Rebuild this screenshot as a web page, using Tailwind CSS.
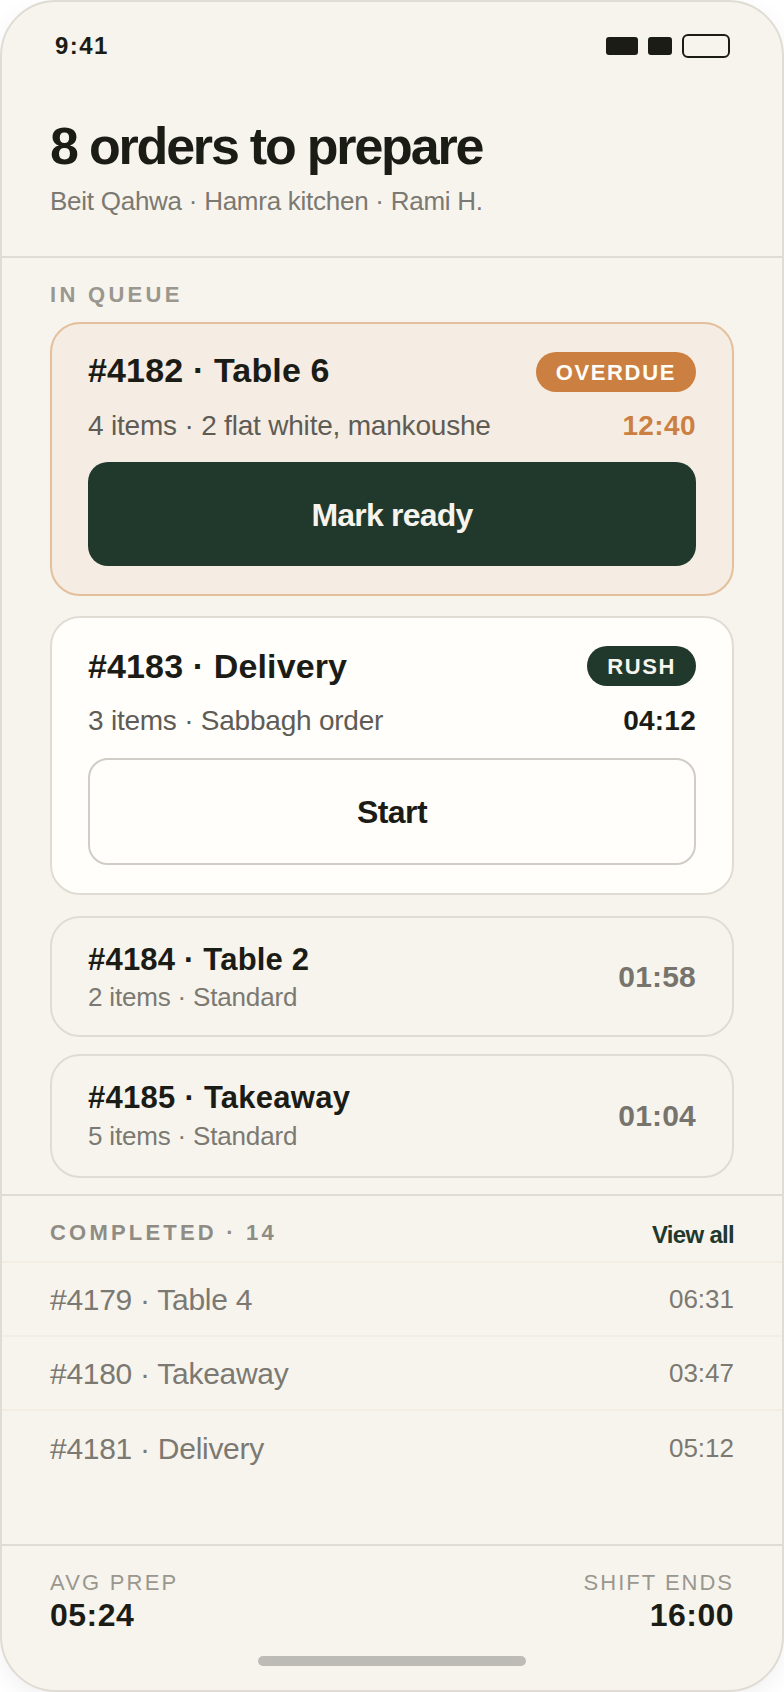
<!DOCTYPE html>
<html lang="en">
<head>
    <meta charset="UTF-8">
    <meta name="viewport" content="width=device-width, initial-scale=1.0">
    <title>Orders to prepare</title>
    <script src="https://cdn.jsdelivr.net/npm/@tailwindcss/browser@4"></script>
</head>
<body class="bg-white">
    <div class="w-[784px] h-[1692px] flex flex-col border-2 border-[#e0dcd3] rounded-[56px] overflow-hidden bg-[#f7f4ee] text-[#1c1c17] shadow-[0_8px_24px_rgba(0,0,0,0.06)] font-['Liberation_Sans',sans-serif]">

        <!-- Status bar -->
        <div class="h-[88px] shrink-0 flex items-center justify-between pl-[53px] pr-[52px]">
            <span class="text-[24px] font-bold tracking-[1.4px]">9:41</span>
            <div class="flex items-center">
                <div class="w-8 h-[18px] rounded-[3px] bg-[#1c1c17]"></div>
                <div class="w-6 h-[18px] rounded-[3px] bg-[#1c1c17] ml-[10px]"></div>
                <div class="w-12 h-6 rounded-[6px] border-2 border-[#1c1c17] ml-[10px]"></div>
            </div>
        </div>

        <!-- Header -->
        <div class="shrink-0 px-12 pt-[26px] pb-[38px] border-b-2 border-[#e0dcd3]">
            <h1 class="text-[52px] leading-[60px] font-bold tracking-[-2.2px]">8 orders to prepare</h1>
            <p class="mt-2 text-[26px] leading-[34px] text-[#7b7971] tracking-[-0.26px]">Beit Qahwa · Hamra kitchen · Rami H.</p>
        </div>

        <!-- Queue -->
        <div class="shrink-0 px-12 pt-[23px] h-[938px] border-b-2 border-[#e0dcd3]">
            <div class="text-[22px] leading-7 font-bold tracking-[3.3px] text-[#9a978f]">IN QUEUE</div>

            <div class="mt-[13px] h-[274px] rounded-[30px] border-2 border-[#e3bf9c] bg-[#f5ede3] px-9 pt-7">
                <div class="flex items-center justify-between h-10">
                    <span class="text-[34px] font-bold tracking-[0.15px] pb-[3px]">#4182 · Table 6</span>
                    <span class="h-10 px-5 flex items-center rounded-full bg-[#cb7f41] text-[#fffdf8] text-[22px] font-bold tracking-[1.65px]">OVERDUE</span>
                </div>
                <div class="mt-4 flex items-center justify-between h-9">
                    <span class="text-[28px] text-[#5f5c56] tracking-[-0.2px]">4 items · 2 flat white, mankoushe</span>
                    <span class="text-[28px] font-bold text-[#cb7f41] tracking-[0.4px]">12:40</span>
                </div>
                <button class="mt-[18px] w-full h-[104px] pt-[2px] rounded-[20px] bg-[#20392c] text-[#f7f4ee] text-[32px] font-bold tracking-[-0.8px]">Mark ready</button>
            </div>

            <div class="mt-5 h-[279px] rounded-[30px] border-2 border-[#e0dcd3] bg-[#fffefa] px-9 pt-7">
                <div class="flex items-center justify-between h-10">
                    <span class="text-[34px] font-bold tracking-[0.13px]">#4183 · Delivery</span>
                    <span class="h-10 px-5 flex items-center rounded-full bg-[#20392c] text-[#f7f4ee] text-[22px] font-bold tracking-[1.6px]">RUSH</span>
                </div>
                <div class="mt-[17px] flex items-center justify-between h-9">
                    <span class="text-[28px] text-[#5f5c56] tracking-[-0.23px]">3 items · Sabbagh order</span>
                    <span class="text-[28px] font-bold tracking-[0.25px]">04:12</span>
                </div>
                <button class="mt-[19px] w-full h-[107px] rounded-[20px] border-2 border-[#d0cdc6] text-[32px] font-bold tracking-[-0.6px]">Start</button>
            </div>

            <div class="mt-[21px] h-[121px] rounded-[30px] border-2 border-[#e0dcd3] px-9 pt-[2px] flex items-center justify-between">
                <div>
                    <div class="text-[31px] leading-9 font-bold tracking-[0.2px]">#4184 · Table 2</div>
                    <div class="mt-[3px] text-[26px] leading-8 text-[#7b7971] tracking-[-0.18px]">2 items · Standard</div>
                </div>
                <span class="text-[30px] font-bold text-[#76746c] tracking-[0.2px] pb-[3px]">01:58</span>
            </div>

            <div class="mt-[17px] h-[124px] rounded-[30px] border-2 border-[#e0dcd3] px-9 flex items-center justify-between">
                <div>
                    <div class="text-[31px] leading-9 font-bold tracking-[0.27px]">#4185 · Takeaway</div>
                    <div class="mt-1 text-[26px] leading-8 text-[#7b7971] tracking-[-0.18px]">5 items · Standard</div>
                </div>
                <span class="text-[30px] font-bold text-[#76746c] tracking-[0.2px] pb-[2px]">01:04</span>
            </div>
        </div>

        <!-- Completed -->
        <div class="h-[67px] shrink-0 px-12 pt-2 flex items-center justify-between border-b-2 border-[#f3ede3]">
            <span class="text-[22px] font-bold tracking-[3.2px] text-[#8f8c84]">COMPLETED · 14</span>
            <span class="text-[24px] font-bold text-[#20392c] tracking-[-0.7px] pt-1">View all</span>
        </div>
        <div class="h-[74px] shrink-0 px-12 flex items-center justify-between border-b-2 border-[#f3ede3] text-[#7b7971]">
            <span class="text-[30px] tracking-[-0.28px]">#4179 · Table 4</span>
            <span class="text-[26px]">06:31</span>
        </div>
        <div class="h-[74px] shrink-0 px-12 flex items-center justify-between border-b-2 border-[#f3ede3] text-[#7b7971]">
            <span class="text-[30px] tracking-[-0.28px]">#4180 · Takeaway</span>
            <span class="text-[26px]">03:47</span>
        </div>
        <div class="h-[74px] shrink-0 px-12 flex items-center justify-between text-[#7b7971]">
            <span class="text-[30px] tracking-[-0.28px]">#4181 · Delivery</span>
            <span class="text-[26px]">05:12</span>
        </div>

        <!-- Footer -->
        <div class="mt-auto h-[146px] shrink-0 border-t-2 border-[#e0dcd3] px-12 pt-[23px] relative">
            <div class="flex justify-between">
                <div>
                    <div class="text-[22px] leading-7 tracking-[2.2px] text-[#9a978f]">AVG PREP</div>
                    <div class="text-[32px] leading-9 font-bold tracking-[0.5px]">05:24</div>
                </div>
                <div class="text-right">
                    <div class="text-[22px] leading-7 tracking-[2px] text-[#9a978f]">SHIFT ENDS</div>
                    <div class="text-[32px] leading-9 font-bold tracking-[0.5px]">16:00</div>
                </div>
            </div>
            <div class="absolute bottom-6 left-[256px] w-[268px] h-[10px] rounded-full bg-[#bdbbb5]"></div>
        </div>
    </div>
</body>
</html>
